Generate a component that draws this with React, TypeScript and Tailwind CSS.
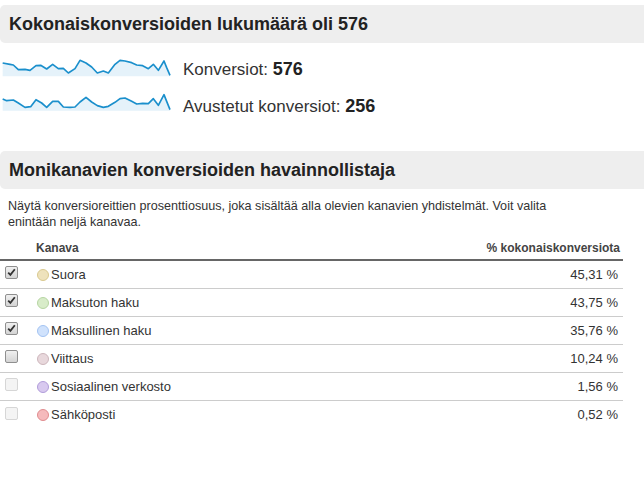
import React from "react";

const line1: [number, number][] = [
  [8, 38], [30, 42], [40, 44], [55, 58], [75, 57], [90, 60], [108, 46], [122, 45], [140, 56], [158, 42], [175, 55], [190, 54], [205, 68], [225, 55], [240, 30], [258, 38], [275, 50], [292, 68], [310, 62], [325, 68], [345, 42], [360, 30], [375, 32], [395, 37], [410, 44], [428, 46], [445, 55], [460, 42], [475, 60], [492, 32], [500, 52], [510, 75],
];
const line2: [number, number][] = [
  [8, 153], [20, 158], [40, 156], [55, 165], [75, 178], [92, 176], [108, 155], [125, 165], [140, 178], [158, 160], [175, 160], [190, 177], [210, 178], [225, 177], [240, 162], [258, 148], [275, 162], [292, 173], [310, 178], [325, 175], [345, 163], [360, 152], [375, 150], [395, 160], [410, 168], [428, 166], [445, 167], [460, 152], [475, 172], [492, 140], [500, 160], [510, 185],
];

function Spark({ pts, top, bottom }: { pts: [number, number][]; top: number; bottom: number }) {
  const line = pts.map((p) => p.join(",")).join(" ");
  const area = `${pts[0][0]},${bottom} ${line} ${pts[pts.length - 1][0]},${bottom}`;
  return (
    <svg width="172" height="20" viewBox={`0 ${top} 516 60`} className="block shrink-0">
      <polygon points={area} fill="#e5f2fa" />
      <polyline points={line} fill="none" stroke="#1a8fcc" strokeWidth="5" strokeLinejoin="round" />
    </svg>
  );
}

type Row = { name: string; pct: string; fill: string; border: string; state: "checked" | "unchecked" | "disabled" };
const rows: Row[] = [
  { name: "Suora", pct: "45,31 %", fill: "#eee2bc", border: "#d9c98f", state: "checked" },
  { name: "Maksuton haku", pct: "43,75 %", fill: "#d8ecc9", border: "#b6d5a2", state: "checked" },
  { name: "Maksullinen haku", pct: "35,76 %", fill: "#d0e2fc", border: "#a3c3f2", state: "checked" },
  { name: "Viittaus", pct: "10,24 %", fill: "#e8d8dc", border: "#cdb6bc", state: "unchecked" },
  { name: "Sosiaalinen verkosto", pct: "1,56 %", fill: "#d8c9ef", border: "#b19dda", state: "disabled" },
  { name: "Sähköposti", pct: "0,52 %", fill: "#f5babc", border: "#e08c8f", state: "disabled" },
];

function Box({ state }: { state: Row["state"] }) {
  if (state === "disabled") {
    return <span className="block w-[13px] h-[13px] rounded-[2px] border border-[#d6d6d6] bg-[#f4f4f4]" />;
  }
  return (
    <span className="relative block w-[13px] h-[13px] rounded-[2px] border border-[#8f8f8f] bg-gradient-to-b from-[#f0f0f0] to-[#d4d4d4]">
      {state === "checked" && (
        <svg viewBox="0 0 11 11" className="absolute left-0 top-0 w-[11px] h-[11px]">
          <path d="M2.2 5.6 L4.4 7.9 L8.8 2.2" fill="none" stroke="#333" strokeWidth="1.8" />
        </svg>
      )}
    </span>
  );
}

export default function App() {
  return (
    <div className="w-[644px] h-[480px] bg-white text-[#222] pt-[5px]" style={{ fontFamily: '"Liberation Sans", Arial, sans-serif' }}>
      <div className="h-[38px] bg-[#eeeeee] rounded-l-[5px] pl-[9px] flex items-center text-[18px] font-bold">
        Kokonaiskonversioiden lukumäärä oli 576
      </div>
      <div className="mt-[14px] flex flex-col gap-[16px]">
        <div className="flex items-center h-[20px]">
          <Spark pts={line1} top={20} bottom={78} />
          <span className="ml-[11px] text-[17px] text-[#333] mt-[4px]">
            Konversiot: <b className="text-[18px] text-[#222]">576</b>
          </span>
        </div>
        <div className="flex items-center h-[20px]">
          <Spark pts={line2} top={135} bottom={188} />
          <span className="ml-[11px] text-[17px] text-[#333] mt-[6px]">
            Avustetut konversiot: <b className="text-[18px] text-[#222]">256</b>
          </span>
        </div>
      </div>
      <div className="mt-[38px] h-[38px] bg-[#eeeeee] rounded-l-[5px] pl-[9px] flex items-center text-[18px] font-bold">
        Monikanavien konversioiden havainnollistaja
      </div>
      <p className="mt-[9px] pl-[8px] w-[575px] text-[12.6px] leading-[16px] text-[#333]">
        Näytä konversioreittien prosenttiosuus, joka sisältää alla olevien kanavien yhdistelmät. Voit valita enintään neljä kanavaa.
      </p>
      <div className="w-[623px] mt-[5px]">
        <div className="flex items-end h-[26px] pb-[2px] border-b-2 border-[#666] text-[12px] font-bold text-[#444]">
          <span className="pl-[36px]">Kanava</span>
          <span className="ml-auto pr-[3px]">% kokonaiskonversiota</span>
        </div>
        {rows.map((r, i) => (
          <div key={r.name} className={`flex items-center h-[28px] ${i < rows.length - 1 ? "border-b border-[#cccccc]" : ""}`}>
            <span className="w-[37px] pl-[5px] -mt-[4px]">
              <Box state={r.state} />
            </span>
            <span className="w-[12px] h-[12px] rounded-full border shrink-0" style={{ backgroundColor: r.fill, borderColor: r.border }} />
            <span className="ml-[2px] text-[13px] text-[#333]">{r.name}</span>
            <span className="ml-auto pr-[5px] text-[13px] text-[#333]">{r.pct}</span>
          </div>
        ))}
      </div>
    </div>
  );
}
